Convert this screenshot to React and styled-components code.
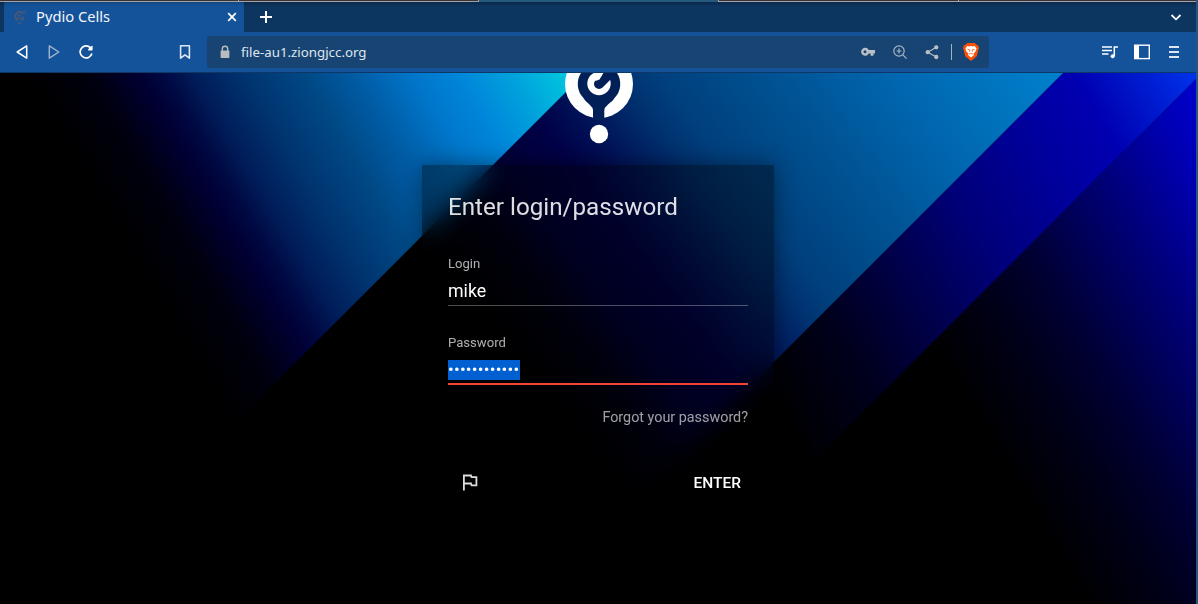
import React from "react";
import styled, { createGlobalStyle } from "styled-components";

const Global = createGlobalStyle`
  * { box-sizing: border-box; }
  body { margin: 0; background: #000; }
`;

const Window = styled.div`
  width: 1198px;
  height: 604px;
  overflow: hidden;
  display: flex;
  flex-direction: column;
  border-right: 2px solid #28567a;
  background: #12539a;
`;

const TopEdge = styled.div`
  flex: none;
  height: 2px;
  width: 1198px;
  display: flex;
  gap: 1px;
  background: #a5a3a6;
`;

const TopSegment = styled.div`
  flex: none;
  width: ${(p) => (p.$first ? 238 : 239)}px;
  height: ${(p) => (p.$active ? 2 : 1)}px;
  background: ${(p) => (p.$active ? "#27597f" : "#383337")};
`;

const TabStrip = styled.div`
  flex: none;
  height: 30px;
  display: flex;
  align-items: center;
  padding: 0 12px 0 4px;
  background: linear-gradient(#0a2848, #0c3560 4px);
  color: #fff;
`;

const Tab = styled.div`
  width: 240px;
  height: 30px;
  border-radius: 2px 2px 0 0;
  background: linear-gradient(#0f4782, #14539a 4px);
  display: flex;
  align-items: center;
  padding: 0 6px 0 8px;
`;

const TabTitle = styled.span`
  flex: 1;
  margin-left: 8px;
  padding-bottom: 2px;
  font: 14.7px/28px "Noto Sans", sans-serif;
  color: #f3f6fa;
`;

const Spacer = styled.div`
  flex: 1;
`;

const NewTab = styled.div`
  display: flex;
  margin-left: 15px;
`;

const Toolbar = styled.div`
  flex: none;
  height: 41px;
  display: flex;
  align-items: center;
  padding: 0 14px 1px;
  background: #14539a;
  border-bottom: 1px solid #0c3766;
`;

const NavGroup = styled.div`
  display: flex;
  gap: 16px;
  flex: none;
  width: 163px;
`;

const Address = styled.div`
  flex: none;
  width: 782px;
  height: 32px;
  margin-left: 14px;
  border-radius: 3px;
  background: #184473;
  display: flex;
  align-items: center;
  padding: 0 9px 0 10px;
`;

const Url = styled.span`
  flex: 1;
  margin-left: 8px;
  font: 13.3px/32px "Noto Sans", sans-serif;
  color: #dfe6ee;
`;

const AddressActions = styled.div`
  display: flex;
  align-items: center;
  gap: 16px;
`;

const Divider = styled.div`
  width: 1px;
  height: 16px;
  margin: 0 -6px 0 -5px;
  background: #a4b2c2;
`;

const MenuGroup = styled.div`
  flex: 1;
  display: flex;
  justify-content: flex-end;
  gap: 16px;
`;

const Icon = styled.svg`
  display: block;
  flex: none;
  width: ${(p) => p.$size || 16}px;
  height: ${(p) => p.$size || 16}px;
`;

const Page = styled.main`
  position: relative;
  flex: 1;
  overflow: hidden;
  display: flex;
  flex-direction: column;
  align-items: center;
  font-family: Roboto, sans-serif;
`;

const Artwork = styled.svg`
  position: absolute;
  inset: 0;
  width: 1196px;
  height: 531px;
`;

const Logo = styled.svg`
  position: relative;
  flex: none;
  width: 72px;
  height: 92px;
  margin-left: 2px;
`;

const Card = styled.form`
  position: relative;
  flex: none;
  width: 352px;
  height: 352px;
  display: flex;
  flex-direction: column;
  padding: 26px 26px 0;
  border-radius: 2px;
  background: rgba(0, 0, 0, 0.4);
  backdrop-filter: blur(13px);
  box-shadow: 0 0 22px rgba(0, 0, 0, 0.42);
`;

const Title = styled.h1`
  margin: 0 0 32px;
  font-weight: 400;
  font-size: 24.2px;
  line-height: 32px;
  color: rgba(255, 255, 255, 0.87);
  white-space: nowrap;
`;

const Field = styled.div`
  height: 51px;
  margin-bottom: ${(p) => (p.$focused ? 24 : 28)}px;
  border-bottom: ${(p) =>
    p.$focused ? "2px solid #f44336" : "1px solid rgba(255, 255, 255, 0.3)"};
`;

const Label = styled.div`
  font-size: 13.1px;
  line-height: 18px;
  color: rgba(255, 255, 255, 0.68);
`;

const Value = styled.div`
  margin-top: 7px;
  font-size: 17.8px;
  line-height: 22px;
  color: #fff;
`;

const Selected = styled.span`
  display: flex;
  width: 72px;
  height: 20px;
  margin-top: 8px;
  background: #0060d2;
  color: #fff;
  overflow: hidden;
  font-size: 17px;
  line-height: 19px;
  letter-spacing: 0.22px;
`;

const Forgot = styled.a`
  align-self: flex-end;
  font-size: 14.35px;
  line-height: 18px;
  color: rgba(255, 255, 255, 0.62);
`;

const Actions = styled.div`
  display: flex;
  align-items: center;
  justify-content: space-between;
  margin-top: 46px;
  padding: 0 7px 0 12px;
`;

const Enter = styled.span`
  font-size: 15.5px;
  line-height: 20px;
  font-weight: 500;
  color: #fff;
`;

const grad = (id, stops, x2 = 886.8, y2 = -523.2) => (
  <linearGradient id={id} gradientUnits="userSpaceOnUse" x1="0" y1="0" x2={x2} y2={y2}>
    {stops.map(([s, c]) => (
      <stop key={s} offset={s / 1030} stopColor={c} />
    ))}
  </linearGradient>
);

const facets = {
  a: [[20, "#000000"], [75, "#00000e"], [120, "#000034"], [140, "#000842"], [165, "#001c58"], [210, "#003470"], [260, "#004884"], [310, "#005ea8"], [355, "#0076ca"], [395, "#0086da"], [440, "#00a2dc"], [490, "#00c8de"]],
  b: [[235, "#000000"], [300, "#000014"], [340, "#000036"], [395, "#000046"], [425, "#000c52"], [460, "#002062"], [490, "#003270"], [520, "#003f7c"], [600, "#005090"], [710, "#0067b0"], [842, "#0080cc"]],
  c: [[495, "#000000"], [590, "#00001c"], [650, "#00003c"], [690, "#000052"], [760, "#000078"], [850, "#00009a"], [925, "#0000b2"], [975, "#0018cc"], [1028, "#0032ea"]],
  d: [[664, "#000000"], [740, "#000018"], [799, "#000034"], [851, "#000058"], [903, "#00007c"], [937, "#000096"], [980, "#0000b6"], [1025, "#0000cc"]],
};

function Background() {
  return (
    <Artwork viewBox="0 0 1196 531">
      <defs>
        {grad("a", facets.a)}
        {grad("b", facets.b, 818, -626)}
        {grad("c", facets.c)}
        {grad("d", facets.d)}
      </defs>
      <rect width="1196" height="531" fill="#000" />
      <path d="M1202 0V531H671Z" fill="url(#d)" />
      <path d="M1063 0H1202L671 531H532Z" fill="url(#c)" />
      <path d="M585 0H1063L532 531H54Z" fill="url(#b)" />
      <path d="M0 0H585L54 531H0Z" fill="url(#a)" />
    </Artwork>
  );
}

export default function App() {
  return (
    <>
      <Global />
      <Window>
        <TopEdge>
          <TopSegment $first /><TopSegment /><TopSegment $active /><TopSegment /><TopSegment />
        </TopEdge>
        <TabStrip>
          <Tab>
            <Icon viewBox="0 0 16 16" fill="none" stroke="#485878" strokeWidth="2">
              <path d="M6.2 11.3A4.2 4.2 0 1 1 11 5M11.6 7.5A4.2 4.2 0 0 1 9 11.3" />
              <path d="M9 6.5A1.7 1.7 0 1 0 9.3 8.6" strokeWidth="1.3" />
              <path d="M10.5 2.5H13.2V5.2" strokeWidth="1.2" />
              <circle cx="7.5" cy="14.2" r="1.3" fill="#485878" stroke="none" />
            </Icon>
            <TabTitle>Pydio Cells</TabTitle>
            <Icon $size={12} viewBox="0 0 12 12" stroke="#fff" strokeWidth="1.7">
              <path d="M2.2 2.2 9.8 9.8M9.8 2.2 2.2 9.8" />
            </Icon>
          </Tab>
          <NewTab>
            <Icon $size={14} viewBox="0 0 14 14" stroke="#fff" strokeWidth="2">
              <path d="M7 1V13M1 7H13" />
            </Icon>
          </NewTab>
          <Spacer />
          <Icon viewBox="0 0 16 16" fill="none" stroke="#fff" strokeWidth="1.8">
            <path d="M3.5 6 8 10.3 12.5 6" />
          </Icon>
        </TabStrip>
        <Toolbar>
          <NavGroup>
            <Icon viewBox="0 0 16 16" fill="none" stroke="#fff" strokeWidth="1.5" strokeLinejoin="round">
              <path d="M12.7 1.8V14.2L3.2 8Z" />
            </Icon>
            <Icon viewBox="0 0 16 16" fill="none" stroke="#9fb5d0" strokeWidth="1.4" strokeLinejoin="round">
              <path d="M3.3 1.8V14.2L12.8 8Z" />
            </Icon>
            <Icon viewBox="0 0 16 16" fill="none" stroke="#fff" strokeWidth="1.7">
              <path d="M12.4 3.7A6 6 0 1 0 13.9 9.6" />
              <path d="M13.9 2.6V5.8H10.7Z" fill="#fff" strokeWidth="1.4" strokeLinejoin="round" />
            </Icon>
          </NavGroup>
          <Icon viewBox="0 0 16 16" fill="none" stroke="#dce6f2" strokeWidth="1.6" strokeLinejoin="round">
            <path d="M3.6 1.7H12.4V14.2L8 10.8 3.6 14.2Z" />
          </Icon>
          <Address>
            <Icon viewBox="0 0 16 16" fill="#b9bdc0">
              <path d="M4 6.5H12A.8.8 0 0 1 12.4 7.2V13.2A.9.9 0 0 1 11.6 14H4.4A.9.9 0 0 1 3.6 13.2V7.2Z" />
              <path d="M5.3 7V5A2.7 2.7 0 0 1 10.7 5V7" fill="none" stroke="#b9bdc0" strokeWidth="1.4" />
            </Icon>
            <Url>file-au1.ziongjcc.org</Url>
            <AddressActions>
              <Icon viewBox="0 0 16 16" fill="#bac0c6">
                <path fillRule="evenodd" d="M8.7 6A4 4 0 1 0 8.7 9.5H10.6V11.8H13.4V9.5H15V6ZM5 9.2A1.5 1.5 0 1 1 5 6.2 1.5 1.5 0 0 1 5 9.2Z" />
              </Icon>
              <Icon viewBox="0 0 16 16" fill="none" stroke="#a9b6c4" strokeWidth="1.2">
                <circle cx="7" cy="7" r="5.2" />
                <path d="M10.8 10.8 14.6 14.6M7 4.6V9.4M4.6 7H9.4" />
              </Icon>
              <Icon viewBox="0 0 16 16" fill="#bac0c6" stroke="#bac0c6" strokeWidth="1.1">
                <path d="M12.3 3.2 3.7 8.2 12.3 13" fill="none" />
                <circle cx="12.3" cy="3.3" r="1.6" />
                <circle cx="3.7" cy="8.2" r="1.6" />
                <circle cx="12.3" cy="13" r="1.6" />
              </Icon>
              <Divider />
              <Icon $size={18} viewBox="0 0 18 18">
                <path d="M5.3 0H12.7L14.4 1.8 16 2.2 17 5 16.4 6.8 14.8 13.2 9 18 3.2 13.2 1.6 6.8 1 5 2 2.2 3.6 1.8Z" fill="#fb5106" />
                <path d="M5.3 3 7.5 3.5 9 3.1 10.5 3.5 12.7 3 14.6 5.4 13.5 8.6 11.6 10.6 12 12 9 14.5 6 12 6.4 10.6 4.5 8.6 3.4 5.4Z" fill="#fff" />
                <path d="M5.4 6.2 8 7 7.5 8.7M12.6 6.2 10 7 10.5 8.7M7 11.2 9 10.2 11 11.2" fill="none" stroke="#fb5106" strokeWidth=".8" />
              </Icon>
            </AddressActions>
          </Address>
          <MenuGroup>
            <Icon viewBox="0 0 16 16" fill="none" stroke="#fff" strokeWidth="1.5">
              <path d="M0 3H10M0 6.5H10M0 10H6.5" />
              <path d="M12.3 12V3H16" />
              <circle cx="10.7" cy="12.2" r="1.8" fill="#fff" strokeWidth=".5" />
            </Icon>
            <Icon viewBox="0 0 16 16" fill="none" stroke="#fff" strokeWidth="1.4">
              <rect x=".7" y="1.2" width="14.6" height="13.4" />
              <path d="M1 1.5H5V14.5H1Z" fill="#fff" stroke="none" />
            </Icon>
            <Icon viewBox="0 0 16 16" fill="none" stroke="#dce6f2" strokeWidth="2">
              <path d="M3 3H13M3 8H13M3 13H13" />
            </Icon>
          </MenuGroup>
        </Toolbar>
        <Page>
          <Background />
          <Logo viewBox="563 73 72 92">
            <circle cx="599" cy="84" r="34" fill="#fff" />
            <path d="M604.3 120V110.5Q604.3 107.5 608 104.5C610 102.8 613.5 100.5 614.5 98A20 20 0 0 0 617 73H581A20 20 0 0 0 583.5 98C584.5 100.5 587.5 102.8 589.5 104.5Q593 107.5 593 110.5V120Z" fill="#012058" />
            <circle cx="599" cy="83.5" r="11.7" fill="#fff" />
            <path d="M599 84 613 70" stroke="#012058" strokeWidth="10" strokeLinecap="round" />
            <path d="M596 72H604L599.5 79.5 595.5 81Z" fill="#fff" />
            <circle cx="599" cy="134" r="9.2" fill="#fff" />
          </Logo>
          <Card>
            <Title>Enter login/password</Title>
            <Field>
              <Label>Login</Label>
              <Value>mike</Value>
            </Field>
            <Field $focused>
              <Label>Password</Label>
              <Selected>••••••••••••</Selected>
            </Field>
            <Forgot>Forgot your password?</Forgot>
            <Actions>
              <Icon $size={20} viewBox="0 0 20 20" fill="none" stroke="#dcdce0" strokeWidth="1.8">
                <path d="M3.9 17.6V2.5H11L11.5 4.2H16.4V12.3H11.6L11 10.5H3.9" />
              </Icon>
              <Enter>ENTER</Enter>
            </Actions>
          </Card>
        </Page>
      </Window>
    </>
  );
}
